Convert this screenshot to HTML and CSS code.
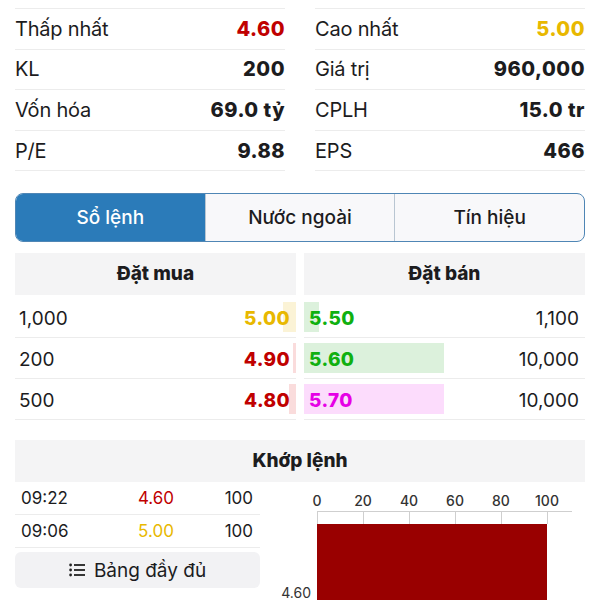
FILE: index.html
```html
<!DOCTYPE html>
<html>

<head>
    <meta charset='utf-8'>
    <title>Chi tiết cổ phiếu</title>
    <meta name='viewport' content='width=device-width, initial-scale=1'>
    <link rel="stylesheet" href="styles.css">
</head>

<body>
    <div class="stats">
        <ul>
            <li><span>Thấp nhất</span><b class="red">4.60</b></li>
            <li><span>KL</span><b>200</b></li>
            <li><span>Vốn hóa</span><b>69.0 tỷ</b></li>
            <li><span>P/E</span><b>9.88</b></li>
        </ul>
        <ul>
            <li><span>Cao nhất</span><b class="yellow">5.00</b></li>
            <li><span>Giá trị</span><b>960,000</b></li>
            <li><span>CPLH</span><b>15.0 tr</b></li>
            <li><span>EPS</span><b>466</b></li>
        </ul>
    </div>

    <div class="tabs">
        <button class="tab active">Sổ lệnh</button>
        <button class="tab">Nước ngoài</button>
        <button class="tab">Tín hiệu</button>
    </div>

    <div class="book">
        <div class="side buy">
            <div class="head">Đặt mua</div>
            <div class="row"><span class="bar bg_yellow" style="width:13px"></span><span>1,000</span><b class="yellow">5.00</b></div>
            <div class="row"><span class="bar bg_red" style="width:3px"></span><span>200</span><b class="red">4.90</b></div>
            <div class="row"><span class="bar bg_red" style="width:7px"></span><span>500</span><b class="red">4.80</b></div>
        </div>
        <div class="side sell">
            <div class="head">Đặt bán</div>
            <div class="row"><span class="bar bg_green" style="width:15px"></span><b class="green">5.50</b><span>1,100</span></div>
            <div class="row"><span class="bar bg_green" style="width:140px"></span><b class="green">5.60</b><span>10,000</span></div>
            <div class="row"><span class="bar bg_pink" style="width:140px"></span><b class="pink">5.70</b><span>10,000</span></div>
        </div>
    </div>

    <div class="match">
        <div class="head">Khớp lệnh</div>
        <div class="match_body">
            <div class="trades">
                <div class="trade"><span>09:22</span><span class="red">4.60</span><span>100</span></div>
                <div class="trade"><span>09:06</span><span class="yellow">5.00</span><span>100</span></div>
                <button class="btn_full">
                    <svg width="16" height="14" viewBox="0 0 16 14">
                        <circle cx="1.6" cy="2" r="1.4" fill="#222"/>
                        <circle cx="1.6" cy="7" r="1.4" fill="#222"/>
                        <circle cx="1.6" cy="12" r="1.4" fill="#222"/>
                        <rect x="5" y="1.1" width="11" height="1.8" fill="#222"/>
                        <rect x="5" y="6.1" width="11" height="1.8" fill="#222"/>
                        <rect x="5" y="11.1" width="11" height="1.8" fill="#222"/>
                    </svg>
                    Bảng đầy đủ
                </button>
            </div>
            <svg class="chart" width="325" height="118" viewBox="0 0 325 118">
                <g class="axis_txt">
                    <text x="55" y="24">0</text>
                    <text x="101" y="24">20</text>
                    <text x="147" y="24">40</text>
                    <text x="193" y="24">60</text>
                    <text x="239" y="24">80</text>
                    <text x="285" y="24">100</text>
                </g>
                <line x1="55" y1="29.5" x2="310" y2="29.5" stroke="#cfcfcf"/>
                <line x1="55.5" y1="29" x2="55.5" y2="42" stroke="#cfcfcf"/>
                <line x1="101.5" y1="29" x2="101.5" y2="42" stroke="#cfcfcf"/>
                <line x1="147.5" y1="29" x2="147.5" y2="42" stroke="#cfcfcf"/>
                <line x1="193.5" y1="29" x2="193.5" y2="42" stroke="#cfcfcf"/>
                <line x1="239.5" y1="29" x2="239.5" y2="42" stroke="#cfcfcf"/>
                <line x1="285.5" y1="29" x2="285.5" y2="42" stroke="#cfcfcf"/>
                <rect x="55" y="42" width="230" height="80" fill="#990000"/>
                <text class="bar_lbl" x="49" y="116">4.60</text>
            </svg>
        </div>
    </div>
</body>

</html>
```

FILE: styles.css
```css
* {
    margin: 0;
    padding: 0;
    box-sizing: border-box;
}

body {
    width: 600px;
    padding: 8px 15px 0;
    font-family: Inter, "Noto Sans", sans-serif;
    color: #1c1c1e;
    overflow: hidden;
}

b {
    font-weight: 800;
}

.red {
    color: #c00000;
}

.yellow {
    color: #e8b800;
}

.green {
    color: #10b010;
}

.pink {
    color: #e600e6;
}

/* thong tin chung */
.stats {
    display: grid;
    grid-template-columns: 1fr 1fr;
    column-gap: 30px;
}

.stats ul {
    list-style-type: none;
    border-top: 1px solid #ececec;
}

.stats li {
    display: flex;
    justify-content: space-between;
    align-items: center;
    height: 40.6px;
    border-bottom: 1px solid #ececec;
    font-size: 20px;
    letter-spacing: -0.2px;
}

.stats li b {
    font-size: 20px;
    letter-spacing: 0.5px;
}

/* tab */
.tabs {
    display: flex;
    margin-top: 22px;
    height: 49px;
    border: 1.5px solid #4f86b5;
    border-radius: 8px;
    overflow: hidden;
    background-color: #f8f8fa;
}

.tab {
    flex: 1;
    border: none;
    border-left: 1px solid #b9c6d2;
    background-color: transparent;
    font-family: inherit;
    font-size: 19px;
    font-weight: 500;
    color: #1c1c1e;
}

.tab:first-child {
    border-left: none;
}

.tab.active {
    background-color: #2b7bb9;
    color: white;
}

/* so lenh */
.head {
    height: 42px;
    line-height: 42px;
    background-color: #f4f4f5;
    text-align: center;
    font-size: 19px;
    font-weight: 800;
}

.book {
    display: grid;
    grid-template-columns: 1fr 1fr;
    column-gap: 8px;
    margin-top: 11px;
}

.book .head {
    margin-bottom: 2px;
}

.row {
    position: relative;
    display: flex;
    justify-content: space-between;
    align-items: center;
    height: 41px;
    padding: 2px 6px 0 4px;
    border-bottom: 1px solid #ececec;
    font-size: 19px;
}

.row b {
    letter-spacing: 0.4px;
}

.sell .row {
    padding: 2px 6px 0 5px;
}

.row span,
.row b {
    position: relative;
}

.row .bar {
    position: absolute;
    top: 5px;
    height: 30px;
}

.buy .bar {
    right: 0;
}

.sell .bar {
    left: 0;
}

.bg_yellow {
    background-color: #fbf3d6;
}

.bg_red {
    background-color: #fadcdc;
}

.bg_green {
    background-color: #dcf1dc;
}

.bg_pink {
    background-color: #fcdcfc;
}

/* khop lenh */
.match {
    margin-top: 20px;
}

.match_body {
    display: flex;
}

.trades {
    flex: none;
    width: 245px;
}

.trade {
    display: grid;
    grid-template-columns: 95px 80px 1fr;
    align-items: center;
    height: 33px;
    padding: 0 7px 0 6px;
    border-bottom: 1px solid #ececec;
    font-size: 17px;
}

.trade span:nth-child(2) {
    text-align: center;
}

.trade span:nth-child(3) {
    text-align: right;
}

.btn_full {
    display: flex;
    justify-content: center;
    align-items: center;
    gap: 9px;
    width: 100%;
    height: 36px;
    margin-top: 4px;
    border: none;
    border-radius: 6px;
    background-color: #f2f2f4;
    font-family: inherit;
    font-size: 19px;
    color: #1c1c1e;
}

.chart {
    flex: none;
    margin-left: 2px;
}

.axis_txt text {
    font-family: Inter, sans-serif;
    font-size: 14px;
    font-weight: 500;
    fill: #333;
    text-anchor: middle;
}

.bar_lbl {
    font-family: Inter, sans-serif;
    font-size: 14px;
    fill: #333;
    text-anchor: end;
}
```
